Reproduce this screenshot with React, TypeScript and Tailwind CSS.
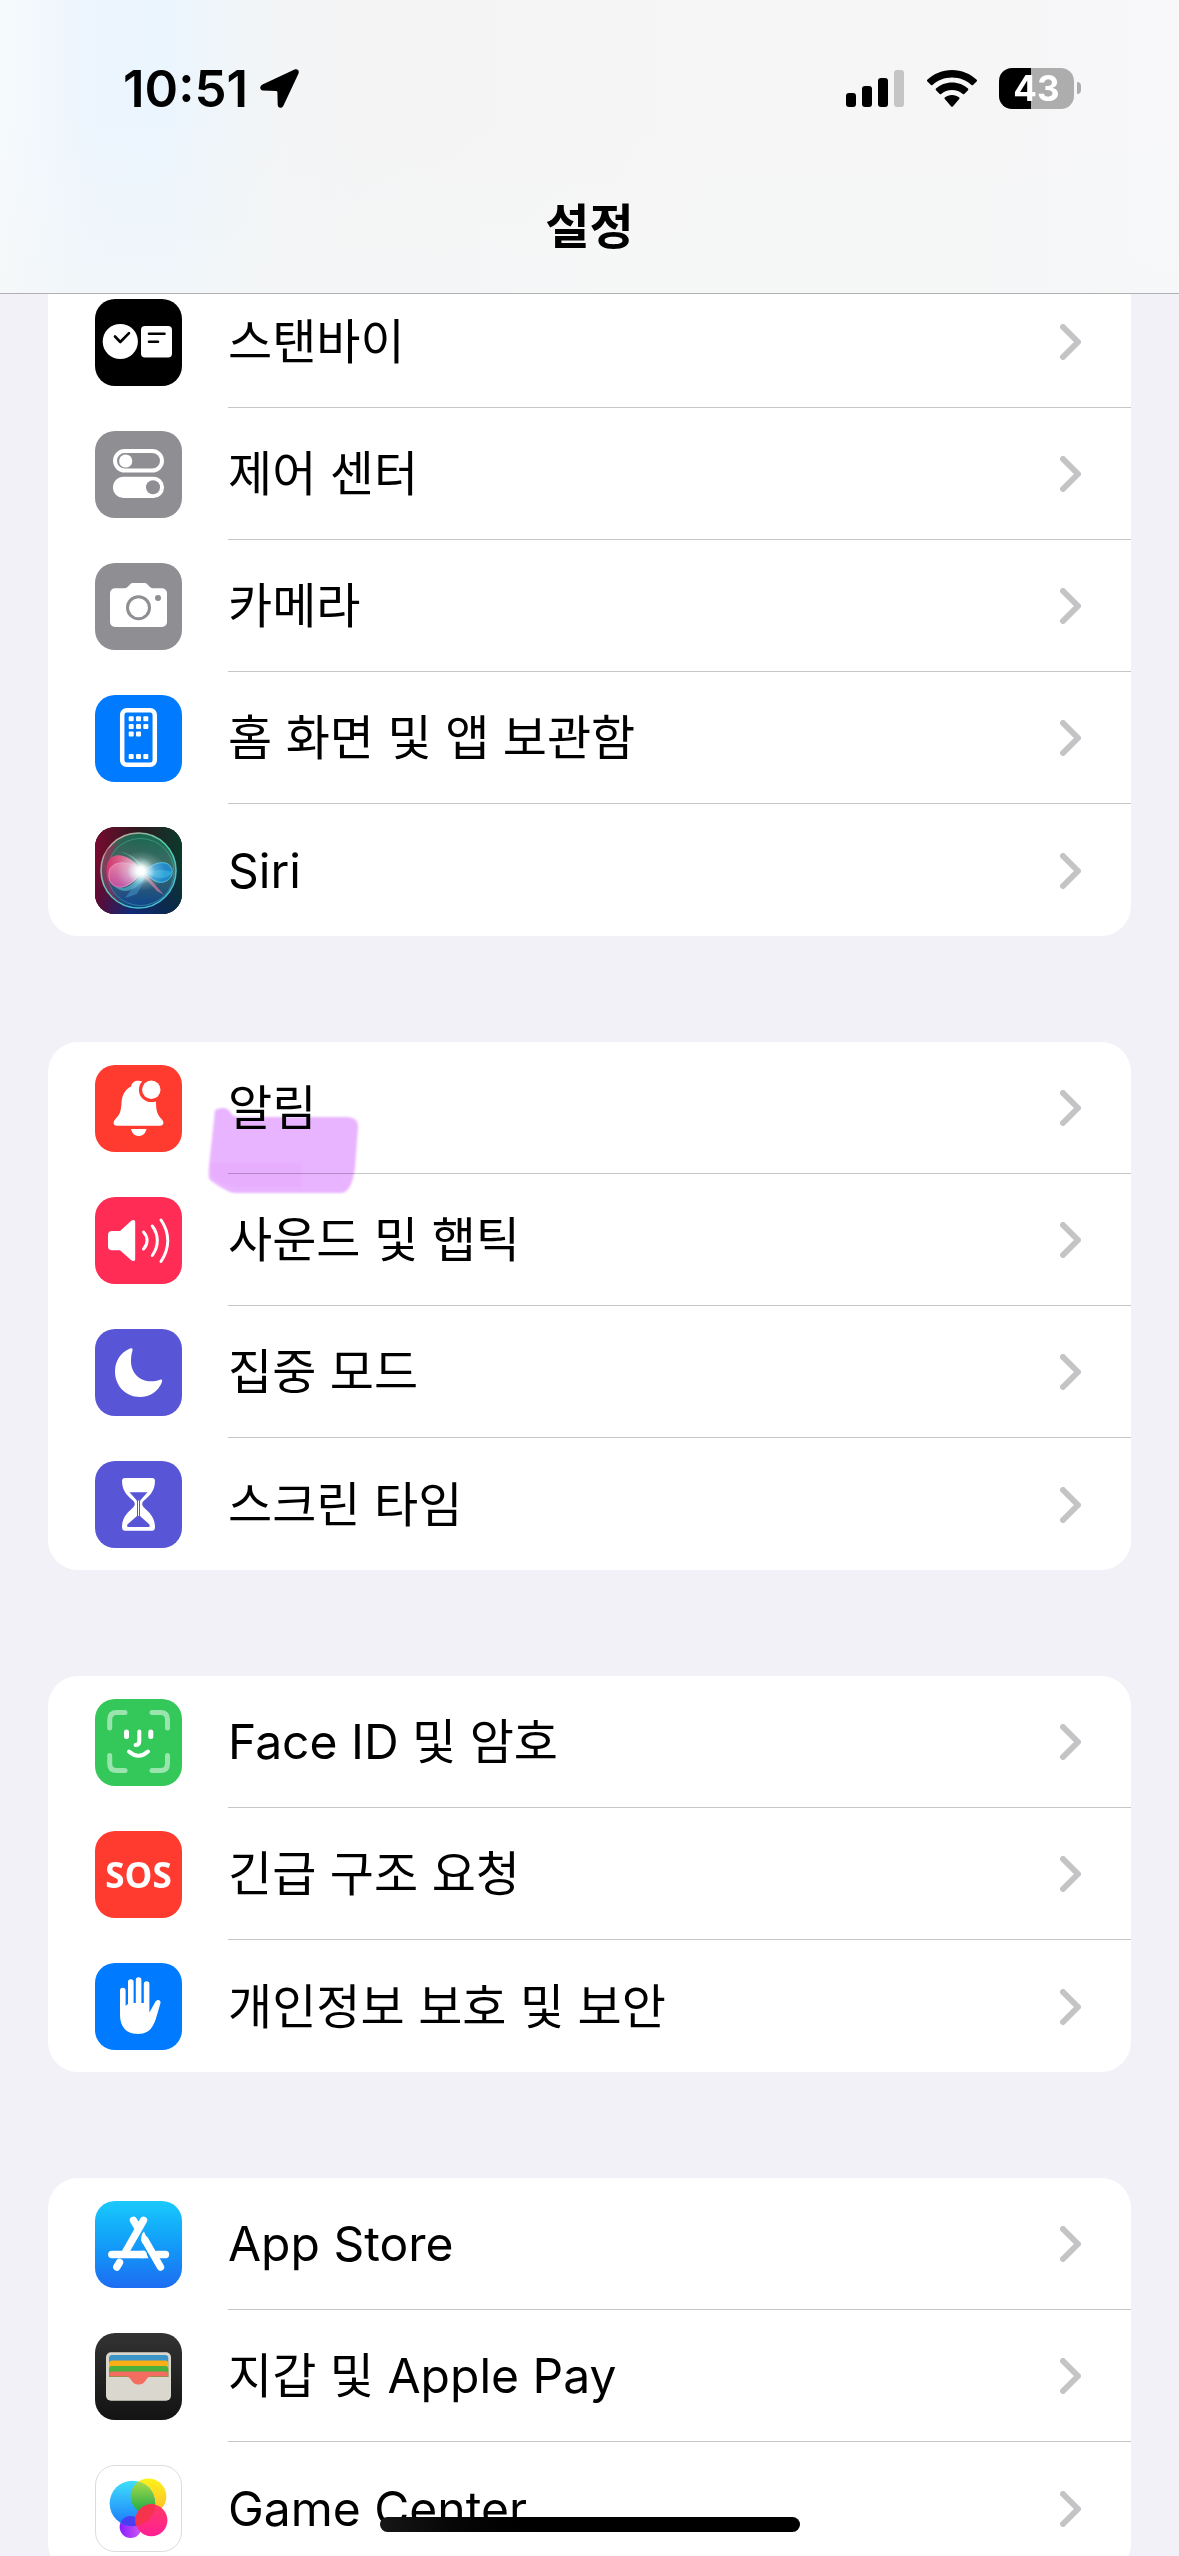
import type { ReactNode } from 'react';

interface SettingsItem {
  name: string;
  icon: ReactNode;
  iconBg: string;
  highlighted?: boolean;
}

function Glyph({ children }: { children: ReactNode }) {
  return (
    <svg viewBox="0 0 87 87" className="h-full w-full" aria-hidden="true">
      {children}
    </svg>
  );
}

function StandByIcon() {
  return (
    <Glyph>
      <circle cx="25.3" cy="42.5" r="17.6" fill="#fff" />
      <rect x="46" y="27" width="31" height="31.5" rx="4" fill="#fff" />
      <g fill="none" stroke="#000" strokeWidth="2.6" strokeLinecap="round" strokeLinejoin="round">
        <path d="M20 37.5 25.3 43 34 34.2" />
        <path d="M54 34.7H69.5M54 42.7H63" />
      </g>
    </Glyph>
  );
}

function ControlCenterIcon() {
  return (
    <Glyph>
      <rect x="20" y="20" width="47" height="19.6" rx="9.8" fill="none" stroke="#fff" strokeWidth="4" />
      <circle cx="30.7" cy="30" r="6.6" fill="#fff" />
      <rect x="18" y="45.7" width="51" height="21.3" rx="10.6" fill="#fff" />
      <circle cx="58" cy="56.3" r="7" fill="#8e8e93" />
    </Glyph>
  );
}

function CameraIcon() {
  return (
    <Glyph>
      <path
        d="M20 25.3H29C30.5 25.3 31.5 25 32.5 24L35 21.5C36 20.4 37 20 38.5 20H49C50.5 20 51.5 20.4 52.5 21.5L55 24C56 25 57 25.3 58.5 25.3H67A5 5 0 0 1 72 30.3V59A5 5 0 0 1 67 64H20A5 5 0 0 1 15 59V30.3A5 5 0 0 1 20 25.3Z"
        fill="#fff"
      />
      <circle cx="43.5" cy="44.7" r="11" fill="none" stroke="#8e8e93" strokeWidth="3" />
      <circle cx="63" cy="35" r="3" fill="#8e8e93" />
    </Glyph>
  );
}

function HomeScreenIcon() {
  const dots = [
    [33.7, 21.3], [41, 21.3], [48.3, 21.3],
    [33.7, 29], [41, 29], [48.3, 29],
    [33.7, 36.5], [41, 36.5],
    [33.7, 59], [41, 59], [48.3, 59],
  ];
  return (
    <Glyph>
      <rect x="27.2" y="15.3" width="32.6" height="54.4" rx="4.5" fill="none" stroke="#fff" strokeWidth="4.5" />
      {dots.map(([x, y]) => (
        <rect key={`${x}-${y}`} x={x} y={y} width="5" height="5" rx="1" fill="#fff" />
      ))}
    </Glyph>
  );
}

function SiriIcon() {
  return (
    <Glyph>
      <defs>
        <linearGradient id="siri-top" x1="0" x2="1">
          <stop offset="0" stopColor="#780a30" />
          <stop offset=".5" stopColor="#2c1a1e" />
          <stop offset="1" stopColor="#0b3a2c" />
        </linearGradient>
        <linearGradient id="siri-bottom" x1="0" x2="1">
          <stop offset="0" stopColor="#5a0a35" />
          <stop offset=".4" stopColor="#102a7a" />
          <stop offset="1" stopColor="#082a45" />
        </linearGradient>
        <linearGradient id="siri-fade" x1="0" y1="0" x2="0" y2="1">
          <stop offset=".4" stopColor="#000" />
          <stop offset="1" stopColor="#fff" />
        </linearGradient>
        <mask id="siri-mask">
          <rect width="87" height="87" fill="url(#siri-fade)" />
        </mask>
        <radialGradient id="siri-glow">
          <stop offset="0" stopColor="#fff" />
          <stop offset=".25" stopColor="#fff" stopOpacity=".95" />
          <stop offset=".55" stopColor="#e8fffb" stopOpacity=".4" />
          <stop offset="1" stopColor="#bff" stopOpacity="0" />
        </radialGradient>
        <linearGradient id="siri-orb" x1="0" y1="0" x2="0" y2="1">
          <stop offset="0" stopColor="#12805c" />
          <stop offset=".45" stopColor="#4d7f7c" />
          <stop offset="1" stopColor="#0b4f9c" />
        </linearGradient>
        <linearGradient id="siri-ring" x1="0" y1="0" x2="1" y2="1">
          <stop offset="0" stopColor="#f0909c" />
          <stop offset=".5" stopColor="#4fd0a8" />
          <stop offset="1" stopColor="#3fb8ee" />
        </linearGradient>
        <linearGradient id="siri-pink" x1="0" x2="1">
          <stop offset="0" stopColor="#e0306a" />
          <stop offset="1" stopColor="#f5b4cc" />
        </linearGradient>
        <linearGradient id="siri-violet" x1="0" y1="0" x2="0" y2="1">
          <stop offset="0" stopColor="#f2a0c0" />
          <stop offset="1" stopColor="#b04fb4" />
        </linearGradient>
      </defs>
      <rect width="87" height="87" fill="url(#siri-top)" />
      <rect width="87" height="87" fill="url(#siri-bottom)" mask="url(#siri-mask)" />
      <circle cx="43.5" cy="43.5" r="37.5" fill="url(#siri-orb)" fillOpacity=".75" stroke="url(#siri-ring)" strokeWidth="1.6" />
      <circle cx="45.5" cy="45" r="33.5" fill="none" stroke="#5fd0b0" strokeOpacity=".4" />
      <path d="M12 22C3 40 7 66 26 76 16 66 12 54 14 40 15 30 18 22 24 15Z" fill="#b01c50" fillOpacity=".5" />
      <path d="M48 45C42 32 31 24 20 25 31 24 42 29 52 45Z" fill="#9be8c8" fillOpacity=".4" />
      <path d="M48 45C38 31 25 25 17 30 9 36 10 54 19 59 29 64 39 55 48 45Z" fill="url(#siri-pink)" fillOpacity=".9" />
      <path d="M48 44C37 34 20 33 15 42 11 53 18 62 28 60 37 57 42 51 48 44Z" fill="url(#siri-violet)" fillOpacity=".6" stroke="#e8a8dc" strokeWidth=".6" />
      <path d="M48 45C39 57 31 65 19 59 30 69 42 63 52 48Z" fill="#4fb0c4" fillOpacity=".7" />
      <path d="M49 45C56 38 65 33 73 37 80 42 78 52 69 55 60 57 55 50 49 45Z" fill="#1d8fd8" fillOpacity=".85" stroke="#58d4e8" strokeWidth=".8" />
      <path d="M50 45C58 43 68 42 77 45 74 52 64 54 50 45Z" fill="#3cc0e8" fillOpacity=".5" />
      <path d="M49 45 69 68 62 64 47 48Z" fill="#d77b9e" fillOpacity=".7" />
      <path d="M47 48 30 71 42 67 52 48Z" fill="#4ca6e0" fillOpacity=".45" />
      <ellipse cx="46" cy="44" rx="25" ry="20" fill="url(#siri-glow)" fillOpacity=".7" />
      <circle cx="46" cy="44" r="14" fill="url(#siri-glow)" />
    </Glyph>
  );
}

function BellIcon() {
  return (
    <Glyph>
      <path
        d="M36 21.5C36.8 17.5 39.5 15.7 43.5 15.7 49 15.7 50.5 19 51 21.5 57.5 25 60.5 30 61 38 61.3 48 63 50 67 54.5 69.5 57.5 68.5 60.7 65 60.7H22C18.5 60.7 17.5 57.5 20 54.5 24.5 50 26 47 26.5 38 27 30 30 24.5 36 21.5Z"
        fill="#fff"
      />
      <path d="M36 64H51.5C50.5 68.5 47.5 71 43.7 71 40 71 37 68.5 36 64Z" fill="#fff" />
      <circle cx="56.3" cy="24.7" r="12.4" fill="#ff3b30" />
      <circle cx="56.3" cy="24.7" r="9.2" fill="#fff" />
    </Glyph>
  );
}

function SoundIcon() {
  return (
    <Glyph>
      <path
        d="M17 34H25L36 24C38 22.3 40.2 22.8 40.2 25V62C40.2 64.2 38 64.8 36 63L25 53.3H17C14.5 53.3 13 52 13 49.5V38C13 35.5 14.5 34 17 34Z"
        fill="#fff"
      />
      <g fill="none" stroke="#fff" strokeWidth="3" strokeLinecap="round">
        <path d="M48.5 35C53.3 40 53.3 47 48.5 52" />
        <path d="M57.3 29C64 38 64 49 57.3 58.5" />
        <path d="M66 23C75 36 75 51 66 64.5" />
      </g>
    </Glyph>
  );
}

function MoonIcon() {
  return (
    <Glyph>
      <path
        d="M35 19.5C25.5 23.5 20 32 20 42.5 20 57 31 68 45 68 55 68 63.5 62 67 53 67.6 51 66.5 50.2 65 50.8 62 52 59 52.3 56.5 52.3 44 52.3 36 43.5 36 32 36 28 36.5 24.5 37.5 21.5 38 19.5 37 18.7 35 19.5Z"
        fill="#fff"
      />
    </Glyph>
  );
}

function HourglassIcon() {
  return (
    <Glyph>
      <path
        d="M30 17H57C59 17 60 18 60 20 60 31 53 36 48.5 40 46.8 41.6 46.8 44.5 48.5 46 53 50.5 60 55.5 60 66 60 68.5 59 69.7 57 69.7H30C28 69.7 27 68.5 27 66 27 55.5 34 50.5 38.5 46 40.2 44.5 40.2 41.6 38.5 40 34 36 27 31 27 20 27 18 28 17 30 17Z"
        fill="#fff"
      />
      <path
        d="M34.5 31.2H52.5L46 38.5C45 39.5 45 40.5 45 42V55L54.5 63.5V66H32.3V63.5L42 55V42C42 40.5 42 39.5 41 38.5Z"
        fill="#5856d6"
      />
      <path d="M43.5 39.5V55" stroke="#fff" strokeWidth="1" />
    </Glyph>
  );
}

function FaceIdIcon() {
  return (
    <Glyph>
      <path
        d="M14.7 29V20.5Q14.7 13.5 21.7 13.5H30M57 13.5H65.5Q72.5 13.5 72.5 20.5V29M72.5 56.500V64.5Q72.5 71.5 65.5 71.5H57M30 71.5H21.7Q14.7 71.5 14.7 64.5V56.5"
        fill="none"
        stroke="#9ae4ad"
        strokeWidth="5"
        strokeLinecap="round"
      />
      <g fill="none" stroke="#fff" strokeLinecap="round">
        <path d="M31.5 33V37.5M55.8 33V37.5" strokeWidth="5" />
        <path d="M44.3 32.5V42Q44.3 46 40.5 46" strokeWidth="4" />
        <path d="M34 52.5Q43.5 61 53 52.5" strokeWidth="4" />
      </g>
    </Glyph>
  );
}

function HandIcon() {
  return (
    <Glyph>
      <g stroke="#fff" strokeWidth="5.6" strokeLinecap="round">
        <path d="M27.8 27.5V50M35.8 19V46M43.6 17V46M51.6 21V50" />
      </g>
      <path
        d="M25 42.5 31 42.5 33 41 38.6 40H49L54.4 49.5 60.5 38.5C62 36 66 36.5 65.5 40L62 52C59 63 55 71 43 71 31.5 71 25 64 25 52Z"
        fill="#fff"
      />
    </Glyph>
  );
}

function AppStoreIcon() {
  return (
    <Glyph>
      <g fill="none" stroke="#fff" strokeWidth="7.4" strokeLinecap="round">
        <path d="M48.5 19.3 31 50M38.5 19.3 43 27" />
        <path d="M16.8 53.5H48M62 53.5H70.5" />
        <path d="M50 39 65.5 66" />
        <path d="M24.5 61.5 21.8 66" />
      </g>
      <path d="M49 30.5C46 33 45.5 38 47.5 42.5L54 42Z" fill="#fff" />
      <path d="M46 49.8 50 49.8 53.5 57.2H46Z" fill="#fff" />
    </Glyph>
  );
}

function WalletIcon() {
  return (
    <Glyph>
      <rect x="11" y="19.3" width="65" height="48.5" rx="5" fill="#dad7ce" />
      <path d="M14 44V25Q14 22 17 22H70.3Q73.3 22 73.3 25V44Z" fill="#3b95c9" />
      <path d="M14 44V30.5Q14 27.5 17 27.5H70.3Q73.3 27.5 73.3 30.5V44Z" fill="#fbaf17" />
      <path d="M14 44V36Q14 33 17 33H70.3Q73.3 33 73.3 36V44Z" fill="#4bb13c" />
      <path
        d="M14 43.5V41.5Q14 38.5 17 38.5H70.3Q73.3 38.5 73.3 41.5V43.5H57C53.5 43.5 52.5 45 51 47 49 50 47 51.5 43.6 51.5 40.2 51.5 38.2 50 36.2 47 34.7 45 33.7 43.5 30.2 43.5Z"
        fill="#f26d5f"
      />
    </Glyph>
  );
}

function GameCenterIcon() {
  return (
    <Glyph>
      <defs>
        <linearGradient id="gc-blue" x1="0" y1="0" x2="0" y2="1">
          <stop offset="0" stopColor="#3fe0fb" />
          <stop offset="1" stopColor="#1a78fb" />
        </linearGradient>
        <linearGradient id="gc-yellow" x1="0" y1="0" x2="0" y2="1">
          <stop offset="0" stopColor="#fdf31c" />
          <stop offset="1" stopColor="#fdb82a" />
        </linearGradient>
        <linearGradient id="gc-green" x1="0" y1="0" x2="0" y2="1">
          <stop offset="0" stopColor="#b4e04a" />
          <stop offset="1" stopColor="#15a648" />
        </linearGradient>
        <linearGradient id="gc-pink" x1="0" y1="0" x2="0" y2="1">
          <stop offset="0" stopColor="#ff3a66" />
          <stop offset="1" stopColor="#ff1f94" />
        </linearGradient>
        <linearGradient id="gc-purple" x1="0" x2="1">
          <stop offset="0" stopColor="#8a1cff" />
          <stop offset="1" stopColor="#d05af0" />
        </linearGradient>
        <clipPath id="gc-clip">
          <circle cx="37.3" cy="38.3" r="23.3" />
        </clipPath>
      </defs>
      <circle cx="35.5" cy="62.5" r="11.3" fill="url(#gc-purple)" />
      <circle cx="53.7" cy="31" r="18.3" fill="url(#gc-yellow)" />
      <circle cx="37.3" cy="38.3" r="23.3" fill="url(#gc-blue)" />
      <g clipPath="url(#gc-clip)">
        <circle cx="53.7" cy="31" r="18.3" fill="url(#gc-green)" />
        <circle cx="35.5" cy="62.5" r="11.3" fill="#4a3ff0" />
      </g>
      <circle cx="56.7" cy="55.5" r="16.4" fill="url(#gc-pink)" />
      <g clipPath="url(#gc-clip)">
        <circle cx="56.7" cy="55.5" r="16.4" fill="#f5334c" />
      </g>
    </Glyph>
  );
}

const groups: SettingsItem[][] = [
  [
    { name: '스탠바이', icon: <StandByIcon />, iconBg: 'bg-black' },
    { name: '제어 센터', icon: <ControlCenterIcon />, iconBg: 'bg-[#8e8e93]' },
    { name: '카메라', icon: <CameraIcon />, iconBg: 'bg-[#8e8e93]' },
    { name: '홈 화면 및 앱 보관함', icon: <HomeScreenIcon />, iconBg: 'bg-[#007aff]' },
    { name: 'Siri', icon: <SiriIcon />, iconBg: 'bg-black' },
  ],
  [
    { name: '알림', icon: <BellIcon />, iconBg: 'bg-[#ff3b30]', highlighted: true },
    { name: '사운드 및 햅틱', icon: <SoundIcon />, iconBg: 'bg-[#ff2d55]' },
    { name: '집중 모드', icon: <MoonIcon />, iconBg: 'bg-[#5856d6]' },
    { name: '스크린 타임', icon: <HourglassIcon />, iconBg: 'bg-[#5856d6]' },
  ],
  [
    { name: 'Face ID 및 암호', icon: <FaceIdIcon />, iconBg: 'bg-[#34c759]' },
    {
      name: '긴급 구조 요청',
      icon: (
        <span className="font-['Open_Sans',sans-serif] text-[35px] leading-none font-bold text-white">SOS</span>
      ),
      iconBg: 'bg-[#ff3b30]',
    },
    { name: '개인정보 보호 및 보안', icon: <HandIcon />, iconBg: 'bg-[#007aff]' },
  ],
  [
    { name: 'App Store', icon: <AppStoreIcon />, iconBg: 'bg-linear-to-b from-[#1bc9fc] to-[#1e6cf2]' },
    { name: '지갑 및 Apple Pay', icon: <WalletIcon />, iconBg: 'bg-linear-to-b from-[#333333] to-[#131313]' },
    { name: 'Game Center', icon: <GameCenterIcon />, iconBg: 'border border-[#dcdcdc] bg-white' },
  ],
];

function StatusBar() {
  return (
    <div className="flex items-center justify-between pt-[66px] pr-[98px] pl-[123px]">
      <div className="flex h-11 items-center gap-3">
        <time className="text-[51px] leading-none font-semibold">10:51</time>
        <svg viewBox="0 0 39 39" className="h-[39px] w-[39px]" aria-hidden="true">
          <path
            d="M34 .7 2.5 15.5C-.8 17.3-.4 21.3 3 21.6L16 22Q17.4 22 17.4 23.4L17.7 36C18 39.4 22 39.8 23.5 36.5L38.3 5C39.8 1.5 37.5-.8 34 .7Z"
            fill="#000"
          />
        </svg>
      </div>
      <div className="flex h-11 items-center">
        <svg viewBox="0 0 58 37" className="mr-[23px] h-[37px] w-[58px]" aria-label="셀룰러 신호">
          <rect x="0" y="23" width="10" height="14" rx="3" />
          <rect x="16" y="16" width="10" height="21" rx="3" />
          <rect x="32" y="8" width="10" height="29" rx="3" />
          <rect x="48" y="0" width="10" height="37" rx="3" fill="#c5c5c5" />
        </svg>
        <svg viewBox="0 0 50 37" className="mr-[22px] h-[37px] w-[50px]" aria-label="Wi-Fi">
          <path d="M25 0C34.5 0 43.5 3.8 49.7 9.8Q50.4 10.6 49.6 11.4L46 15Q45.3 15.6 44.5 15C39.3 10.2 32.5 7.5 25 7.5S10.7 10.2 5.5 15Q4.7 15.6 4 15L.4 11.4Q-.4 10.6.3 9.8C6.5 3.8 15.5 0 25 0Z" />
          <path d="M25 12.5C31.2 12.5 36.8 14.8 41 18.6Q41.8 19.4 41 20.2L37.3 23.9Q36.6 24.5 35.8 23.9C32.9 21.4 29.2 20 25 20S17.1 21.4 14.2 23.9Q13.4 24.5 12.7 23.9L9 20.2Q8.2 19.4 9 18.6C13.2 14.8 18.8 12.5 25 12.5Z" />
          <path d="M25 25C27.8 25 30.3 26 32.2 27.6Q32.9 28.3 32.2 29L25.8 36.4Q25 37.2 24.2 36.4L17.8 29Q17.1 28.3 17.8 27.6C19.7 26 22.2 25 25 25Z" />
        </svg>
        <div className="flex h-[41px] w-[75px] items-center justify-center rounded-[13px] bg-linear-to-r from-black from-43% to-[#adadad] to-43% text-[35px] leading-none font-bold text-white">
          43
        </div>
        <div className="ml-[3px] h-3 w-1 rounded-r-full bg-[#adadad]" />
      </div>
    </div>
  );
}

function SettingsRow({ item, last }: { item: SettingsItem; last: boolean }) {
  return (
    <li className="relative">
      <a href="#" className="flex h-[132px] items-center gap-[46px] pl-[47px]">
        <span className={`flex h-[87px] w-[87px] shrink-0 items-center justify-center overflow-hidden rounded-[20px] ${item.iconBg}`}>
          {item.icon}
        </span>
        <span
          className={`flex h-full flex-1 items-center justify-between pt-px pr-[50px] ${last ? '' : 'border-b border-[#c6c6c8]'}`}
        >
          <span className="text-5xl leading-none">{item.name}</span>
          <svg viewBox="0 0 21 36" className="h-9 w-[21px]" aria-hidden="true">
            <path d="M3 3 18 18 3 33" fill="none" stroke="#c4c4c6" strokeWidth="6" strokeLinecap="round" strokeLinejoin="round" />
          </svg>
        </span>
      </a>
      {item.highlighted && (
        <svg
          viewBox="0 0 152 90"
          className="pointer-events-none absolute top-16 left-40 z-10 h-[90px] w-[152px] overflow-visible mix-blend-multiply blur-[1px]"
          aria-hidden="true"
        >
          <path
            d="M7 4Q18-1 23 7 25 11 32 11H140Q151 12 150 22L147 62Q144 85 134 87H27Q20 87 2 74 0 72 1 60Z"
            fill="#e9b4ff"
          />
          <path d="M3 57 94 57V81H30Q14 79 4 70Z" fill="#e5a8fb" fillOpacity=".5" />
        </svg>
      )}
    </li>
  );
}

export default function App() {
  return (
    <div className="flex h-screen flex-col overflow-hidden bg-[#f2f1f7] font-[Inter,'Noto_Sans_CJK_KR',sans-serif] text-black">
      <header className="h-[294px] shrink-0 border-b border-[#b1b1b4] bg-[linear-gradient(to_right,#f6fafc,#ecf5fe_8%,#ebf5fe_14%,#f2f5f7_21%,#f4f4f5_30%,#f6f6f6_60%,#f6f6f7_85%,#f8f8fb)]">
        <div className="h-full bg-linear-to-b from-transparent from-40% to-[#f5f7f7]/60">
          <StatusBar />
          <h1 className="pt-[93px] text-center text-5xl leading-none font-semibold">설정</h1>
        </div>
      </header>

      <main className="flex-1 overflow-hidden px-12">
        <div className="-mt-[18px] space-y-[106px]">
          {groups.map((items, index) => (
            <ul key={index} className={`bg-white ${index === 0 ? 'rounded-b-[30px]' : 'rounded-[30px]'}`}>
              {items.map((item, i) => (
                <SettingsRow key={item.name} item={item} last={i === items.length - 1} />
              ))}
            </ul>
          ))}
        </div>
      </main>

      <div className="fixed bottom-6 left-1/2 z-20 h-[15px] w-[420px] -translate-x-1/2 rounded-full bg-linear-to-r from-[#171717] to-black to-45%" />
    </div>
  );
}
